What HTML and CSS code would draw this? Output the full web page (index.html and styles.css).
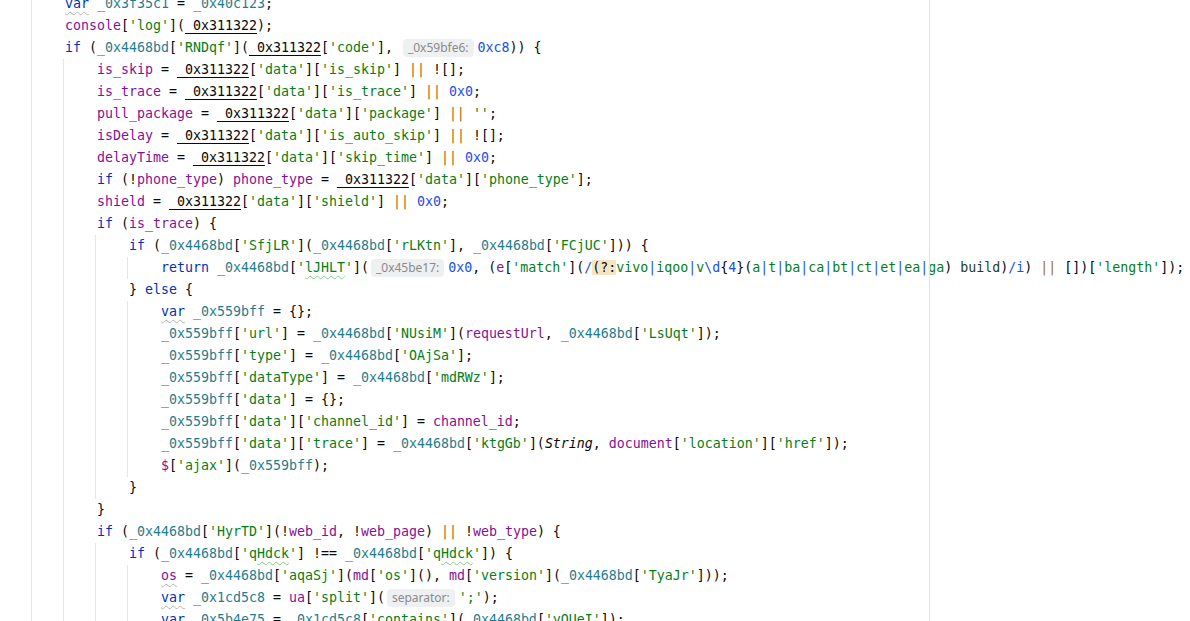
FILE: index.html
```html
<!DOCTYPE html>
<html>
<head>
<meta charset="utf-8">
<link rel="stylesheet" href="styles.css">
</head>
<body>
<div class="editor">
<div class="ln"><span class="ind"></span><span class="code"><span class="k w">var</span> <span class="l">_0x3f35c1</span> = <span class="l">_0x40c123</span>;</span></div>
<div class="ln"><span class="ind"></span><span class="code"><span class="g">console</span>[<span class="s">'log'</span>](<span class="p">_0x311322</span>);</span></div>
<div class="ln"><span class="ind"></span><span class="code"><span class="k">if</span> (<span class="l">_0x4468bd</span>[<span class="s">'RNDqf'</span>](<span class="p">_0x311322</span>[<span class="s">'code'</span>], <span class="h">_0x59bfe6:</span><span class="n">0xc8</span>)) {</span></div>
<div class="ln"><span class="ind"></span><span class="ind"></span><span class="code"><span class="g">is_skip</span> = <span class="p">_0x311322</span>[<span class="s">'data'</span>][<span class="s">'is_skip'</span>] <span class="o">||</span> ![];</span></div>
<div class="ln"><span class="ind"></span><span class="ind"></span><span class="code"><span class="g">is_trace</span> = <span class="p">_0x311322</span>[<span class="s">'data'</span>][<span class="s">'is_trace'</span>] <span class="o">||</span> <span class="n">0x0</span>;</span></div>
<div class="ln"><span class="ind"></span><span class="ind"></span><span class="code"><span class="g">pull_package</span> = <span class="p">_0x311322</span>[<span class="s">'data'</span>][<span class="s">'package'</span>] <span class="o">||</span> <span class="s">''</span>;</span></div>
<div class="ln"><span class="ind"></span><span class="ind"></span><span class="code"><span class="g">isDelay</span> = <span class="p">_0x311322</span>[<span class="s">'data'</span>][<span class="s">'is_auto_skip'</span>] <span class="o">||</span> ![];</span></div>
<div class="ln"><span class="ind"></span><span class="ind"></span><span class="code"><span class="g">delayTime</span> = <span class="p">_0x311322</span>[<span class="s">'data'</span>][<span class="s">'skip_time'</span>] <span class="o">||</span> <span class="n">0x0</span>;</span></div>
<div class="ln"><span class="ind"></span><span class="ind"></span><span class="code"><span class="k">if</span> (!<span class="g">phone_type</span>) <span class="g">phone_type</span> = <span class="p">_0x311322</span>[<span class="s">'data'</span>][<span class="s">'phone_type'</span>];</span></div>
<div class="ln"><span class="ind"></span><span class="ind"></span><span class="code"><span class="g">shield</span> = <span class="p">_0x311322</span>[<span class="s">'data'</span>][<span class="s">'shield'</span>] <span class="o">||</span> <span class="n">0x0</span>;</span></div>
<div class="ln"><span class="ind"></span><span class="ind"></span><span class="code"><span class="k">if</span> (<span class="g">is_trace</span>) {</span></div>
<div class="ln"><span class="ind"></span><span class="ind"></span><span class="ind"></span><span class="code"><span class="k">if</span> (<span class="l">_0x4468bd</span>[<span class="s">'SfjLR'</span>](<span class="l">_0x4468bd</span>[<span class="s">'rLKtn'</span>], <span class="l">_0x4468bd</span>[<span class="s">'FCjUC'</span>])) {</span></div>
<div class="ln"><span class="ind"></span><span class="ind"></span><span class="ind"></span><span class="ind"></span><span class="code"><span class="k">return</span> <span class="l">_0x4468bd</span>[<span class="s">'<span class="t">lJHLT</span>'</span>](<span class="h">_0x45be17:</span><span class="n">0x0</span>, (<span class="g">e</span>[<span class="s">'match'</span>](<span class="rx">/</span><span class="hl">(?:</span><span class="s">vivo</span><span class="rx">|</span><span class="s">iqoo</span><span class="rx">|</span><span class="s">v</span><span class="rx">\d</span>{<span class="n">4</span>}(<span class="s">a</span><span class="rx">|</span><span class="s">t</span><span class="rx">|</span><span class="s">ba</span><span class="rx">|</span><span class="s">ca</span><span class="rx">|</span><span class="s">bt</span><span class="rx">|</span><span class="s">ct</span><span class="rx">|</span><span class="s">et</span><span class="rx">|</span><span class="s">ea</span><span class="rx">|</span><span class="s">ga</span>) <span class="dk">build</span>)<span class="rx">/i</span>) <span class="o">||</span> [])[<span class="s">'length'</span>]);</span></div>
<div class="ln"><span class="ind"></span><span class="ind"></span><span class="ind"></span><span class="code">} <span class="k">else</span> {</span></div>
<div class="ln"><span class="ind"></span><span class="ind"></span><span class="ind"></span><span class="ind"></span><span class="code"><span class="k w">var</span> <span class="l">_0x559bff</span> = {};</span></div>
<div class="ln"><span class="ind"></span><span class="ind"></span><span class="ind"></span><span class="ind"></span><span class="code"><span class="l">_0x559bff</span>[<span class="s">'url'</span>] = <span class="l">_0x4468bd</span>[<span class="s">'NUsiM'</span>](<span class="g">requestUrl</span>, <span class="l">_0x4468bd</span>[<span class="s">'LsUqt'</span>]);</span></div>
<div class="ln"><span class="ind"></span><span class="ind"></span><span class="ind"></span><span class="ind"></span><span class="code"><span class="l">_0x559bff</span>[<span class="s">'type'</span>] = <span class="l">_0x4468bd</span>[<span class="s">'OAjSa'</span>];</span></div>
<div class="ln"><span class="ind"></span><span class="ind"></span><span class="ind"></span><span class="ind"></span><span class="code"><span class="l">_0x559bff</span>[<span class="s">'dataType'</span>] = <span class="l">_0x4468bd</span>[<span class="s">'mdRWz'</span>];</span></div>
<div class="ln"><span class="ind"></span><span class="ind"></span><span class="ind"></span><span class="ind"></span><span class="code"><span class="l">_0x559bff</span>[<span class="s">'data'</span>] = {};</span></div>
<div class="ln"><span class="ind"></span><span class="ind"></span><span class="ind"></span><span class="ind"></span><span class="code"><span class="l">_0x559bff</span>[<span class="s">'data'</span>][<span class="s">'channel_id'</span>] = <span class="g">channel_id</span>;</span></div>
<div class="ln"><span class="ind"></span><span class="ind"></span><span class="ind"></span><span class="ind"></span><span class="code"><span class="l">_0x559bff</span>[<span class="s">'data'</span>][<span class="s">'trace'</span>] = <span class="l">_0x4468bd</span>[<span class="s">'ktgGb'</span>](<span class="i">String</span>, <span class="g">document</span>[<span class="s">'location'</span>][<span class="s">'href'</span>]);</span></div>
<div class="ln"><span class="ind"></span><span class="ind"></span><span class="ind"></span><span class="ind"></span><span class="code"><span class="g">$</span>[<span class="s">'ajax'</span>](<span class="l">_0x559bff</span>);</span></div>
<div class="ln"><span class="ind"></span><span class="ind"></span><span class="ind"></span><span class="code">}</span></div>
<div class="ln"><span class="ind"></span><span class="ind"></span><span class="code">}</span></div>
<div class="ln"><span class="ind"></span><span class="ind"></span><span class="code"><span class="k">if</span> (<span class="l">_0x4468bd</span>[<span class="s">'HyrTD'</span>](!<span class="g">web_id</span>, !<span class="g">web_page</span>) <span class="o">||</span> !<span class="g">web_type</span>) {</span></div>
<div class="ln"><span class="ind"></span><span class="ind"></span><span class="ind"></span><span class="code"><span class="k">if</span> (<span class="l">_0x4468bd</span>[<span class="s">'q<span class="t">Hdck</span>'</span>] !== <span class="l">_0x4468bd</span>[<span class="s">'q<span class="t">Hdck</span>'</span>]) {</span></div>
<div class="ln"><span class="ind"></span><span class="ind"></span><span class="ind"></span><span class="ind"></span><span class="code"><span class="g w">os</span> = <span class="l">_0x4468bd</span>[<span class="s">'aqaSj'</span>](<span class="g">md</span>[<span class="s">'os'</span>](), <span class="g">md</span>[<span class="s">'version'</span>](<span class="l">_0x4468bd</span>[<span class="s">'TyaJr'</span>]));</span></div>
<div class="ln"><span class="ind"></span><span class="ind"></span><span class="ind"></span><span class="ind"></span><span class="code"><span class="k w">var</span> <span class="l">_0x1cd5c8</span> = <span class="g">ua</span>[<span class="s">'split'</span>](<span class="h">separator:</span><span class="s">';'</span>);</span></div>
<div class="ln"><span class="ind"></span><span class="ind"></span><span class="ind"></span><span class="ind"></span><span class="code"><span class="k w">var</span> <span class="l">_0x5b4e75</span> = <span class="l">_0x1cd5c8</span>[<span class="s">'contains'</span>](<span class="l">_0x4468bd</span>[<span class="s">'yQUeI'</span>]);</span></div>
</div>
</body>
</html>
```
FILE: styles.css
```css
html, body {
  margin: 0;
  padding: 0;
  background: #ffffff;
  width: 1190px;
  height: 621px;
  overflow: hidden;
}

.editor {
  position: relative;
  margin-top: -7px;
  padding-left: 31px;
  height: 640px;
  font-family: "DejaVu Sans Mono", "Liberation Mono", monospace;
  font-size: 13.29px;
  line-height: 22px;
  color: #080808;
}

.editor::after {
  content: "";
  position: absolute;
  left: 929px;
  top: 0;
  bottom: 0;
  width: 1px;
  background: #e2e2e2;
}

.ln {
  display: flex;
  align-items: stretch;
  height: 22px;
}

.ind {
  flex: 0 0 32px;
  box-sizing: border-box;
  border-left: 1px solid #e6e6e6;
}

.code {
  display: block;
  padding-left: 2px;
  white-space: pre;
  line-height: 22px;
}

.k { color: #0033b3; }
.g { color: #871094; }
.l { color: #1f7d8f; }
.p {
  color: #080808;
  text-decoration: underline;
  text-decoration-thickness: 1px;
  text-underline-offset: 3px;
}
.s { color: #067d17; }
.n { color: #1750eb; }
.o { color: #a06a10; }
.i { font-style: italic; color: #080808; }
.rx { color: #1750eb; }
.dk { color: #1f3d1f; }
.hl { background: #f5e6c3; }

.w {
  text-decoration: underline wavy #b4b4b4;
  text-decoration-thickness: 1px;
  text-underline-offset: 3px;
}

.t {
  text-decoration: underline wavy #8cc88e;
  text-decoration-thickness: 1px;
  text-underline-offset: 3px;
}

.h {
  display: inline-block;
  vertical-align: top;
  height: 18px;
  line-height: 18px;
  margin: 2px 4px 0 2px;
  padding: 0 5px;
  border-radius: 4px;
  background: #eff0f2;
  color: #8a8a8a;
  font-family: "Noto Sans", "Open Sans", sans-serif;
  font-size: 12px;
}
```
